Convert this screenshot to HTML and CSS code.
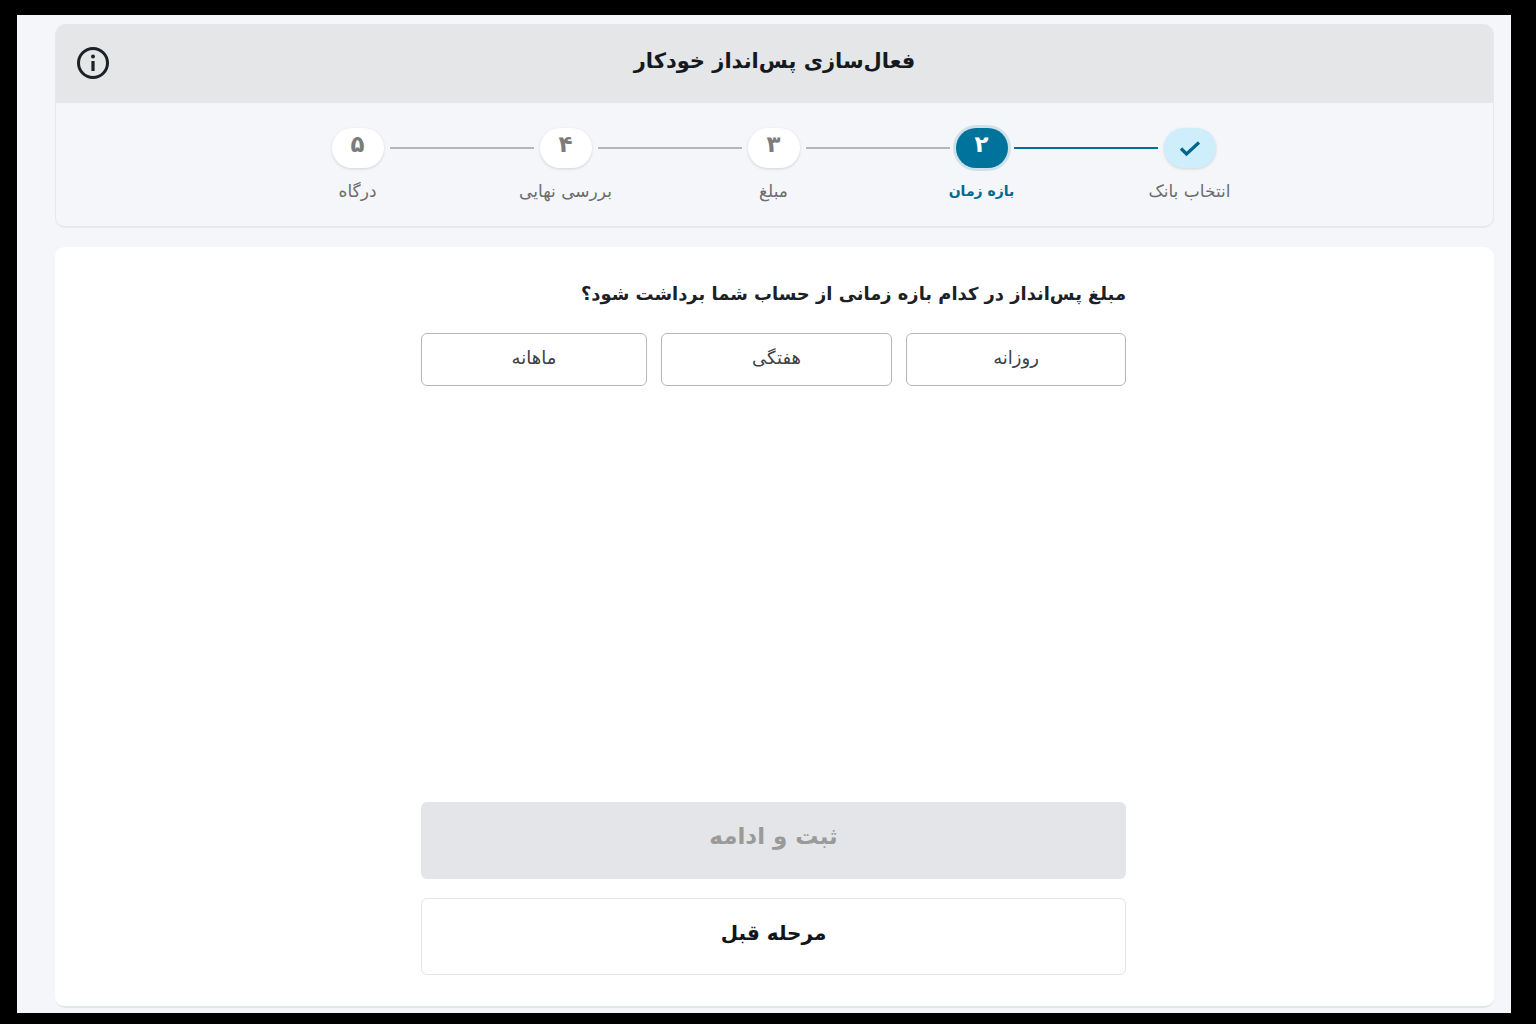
FILE: index.html
```html
<!DOCTYPE html>
<html lang="fa" dir="rtl">
<head>
    <meta charset="UTF-8">
    <meta name="viewport" content="width=device-width, initial-scale=1.0">
    <title>فعال‌سازی پس‌انداز خودکار</title>
    <link rel="stylesheet" href="styles.css">
</head>
<body>
    <div class="page">
        <section class="wizard">
            <header class="wizard-head">
                <h1 class="wizard-title">فعال‌سازی پس‌انداز خودکار</h1>
                <button class="info-button" aria-label="راهنما">
                    <svg width="36" height="36" viewBox="0 0 36 36" fill="none">
                        <circle cx="18" cy="18" r="14.5" stroke="#1b2126" stroke-width="3"/>
                        <rect x="16.4" y="16" width="3.2" height="10" fill="#1b2126"/>
                        <circle cx="18" cy="11.6" r="2" fill="#1b2126"/>
                    </svg>
                </button>
            </header>
            <ol class="steps">
                <li class="step step-done">
                    <span class="step-pill">
                        <svg width="24" height="24" viewBox="0 0 24 24" fill="none">
                            <path d="M3 12.5l5.5 5.5L21 6.5" stroke="#00658a" stroke-width="3.2"/>
                        </svg>
                    </span>
                    <span class="step-label">انتخاب بانک</span>
                </li>
                <li class="step-line step-line-done"></li>
                <li class="step step-active">
                    <span class="step-pill">۲</span>
                    <span class="step-label">بازه زمان</span>
                </li>
                <li class="step-line"></li>
                <li class="step">
                    <span class="step-pill">۳</span>
                    <span class="step-label">مبلغ</span>
                </li>
                <li class="step-line"></li>
                <li class="step">
                    <span class="step-pill">۴</span>
                    <span class="step-label">بررسی نهایی</span>
                </li>
                <li class="step-line"></li>
                <li class="step">
                    <span class="step-pill">۵</span>
                    <span class="step-label">درگاه</span>
                </li>
            </ol>
        </section>

        <main class="panel">
            <div class="panel-body">
                <h2 class="question">مبلغ پس‌انداز در کدام بازه زمانی از حساب شما برداشت شود؟</h2>
                <div class="options">
                    <button class="option">روزانه</button>
                    <button class="option">هفتگی</button>
                    <button class="option">ماهانه</button>
                </div>
                <div class="actions">
                    <button class="action action-submit" disabled>ثبت و ادامه</button>
                    <button class="action action-back">مرحله قبل</button>
                </div>
            </div>
        </main>
    </div>
</body>
</html>
```

FILE: styles.css
```css
* { box-sizing: border-box; }
html, body { height: 100%; }
body {
    margin: 0;
    background-color: #000;
    font-family: "DejaVu Sans", "Noto Sans", sans-serif;
    overflow: hidden;
}
button { font-family: inherit; }

.page {
    display: flex;
    flex-direction: column;
    gap: 19px;
    height: 998px;
    margin: 15px 25px 11px 17px;
    padding: 9px 17px 5px 38px;
    background-color: #f4f6fa;
}

.wizard {
    height: 204px;
    border: 1px solid #e6e8eb;
    border-top: 0;
    border-bottom-width: 2px;
    border-radius: 10px;
}
.wizard-head {
    position: relative;
    display: flex;
    justify-content: center;
    align-items: center;
    height: 79px;
    padding-bottom: 5px;
    background-color: #e5e6e8;
    border-radius: 10px 10px 0 0;
}
.wizard-title {
    margin: 0;
    font-size: 21px;
    font-weight: bold;
    color: #14191e;
}
.info-button {
    position: absolute;
    top: 21px;
    left: 19px;
    padding: 0;
    border: 0;
    background: none;
    line-height: 0;
}

.steps {
    display: flex;
    justify-content: center;
    margin: 0;
    padding: 25px 2px 0 0;
    list-style: none;
}
.step {
    display: flex;
    flex-direction: column;
    align-items: center;
    gap: 13px;
    width: 52px;
}
.step-pill {
    display: flex;
    justify-content: center;
    align-items: center;
    width: 52px;
    height: 40px;
    padding-bottom: 8px;
    border-radius: 20px;
    background-color: #fff;
    box-shadow: 0 1px 3px rgba(0, 0, 0, 0.14);
    font-size: 23px;
    font-weight: bold;
    color: #7c7c7c;
}
.step-label {
    font-size: 17px;
    color: #6c6c6c;
    white-space: nowrap;
}
.step-line {
    width: 144px;
    height: 2px;
    margin: 19px 6px 0;
    background-color: #b4b6b9;
}
.step-line-done { background-color: #00709a; }

.step-done .step-pill {
    padding-bottom: 0;
    background-color: #cfeefc;
}
.step-active .step-pill {
    background-color: #00739c;
    color: #fff;
    box-shadow: 0 0 0 3px #cfe2ec;
}
.step-active .step-label {
    font-size: 14px;
    line-height: 20px;
    font-weight: bold;
    color: #00698f;
}

.panel {
    flex: 1;
    display: flex;
    justify-content: center;
    background-color: #fff;
    border-radius: 10px;
    border-bottom: 2px solid #dfe6ec;
}
.panel-body {
    display: flex;
    flex-direction: column;
    width: 705px;
    padding: 33px 0 31px;
    margin-right: 2px;
}
.question {
    margin: 0 0 26px;
    font-size: 17.9px;
    line-height: 27px;
    font-weight: bold;
    color: #1b2126;
}
.options {
    display: grid;
    grid-template-columns: 220px 231px 1fr;
    gap: 14px;
}
.option {
    height: 53px;
    padding: 0 0 5px;
    background-color: #fff;
    border: 1px solid #b5b7ba;
    border-radius: 6px;
    font-size: 18px;
    color: #3c4146;
}
.actions {
    display: flex;
    flex-direction: column;
    gap: 19px;
    margin-top: auto;
}
.action {
    height: 77px;
    padding: 0 0 8px;
    border-radius: 6px;
    font-weight: bold;
}
.action-submit {
    border: 0;
    background-color: #e4e5e8;
    color: #9a9a9a;
    font-size: 23px;
    padding-bottom: 10px;
}
.action-back {
    border: 1px solid #e2e4e7;
    background-color: #fff;
    color: #10151a;
    font-size: 20px;
}
```
